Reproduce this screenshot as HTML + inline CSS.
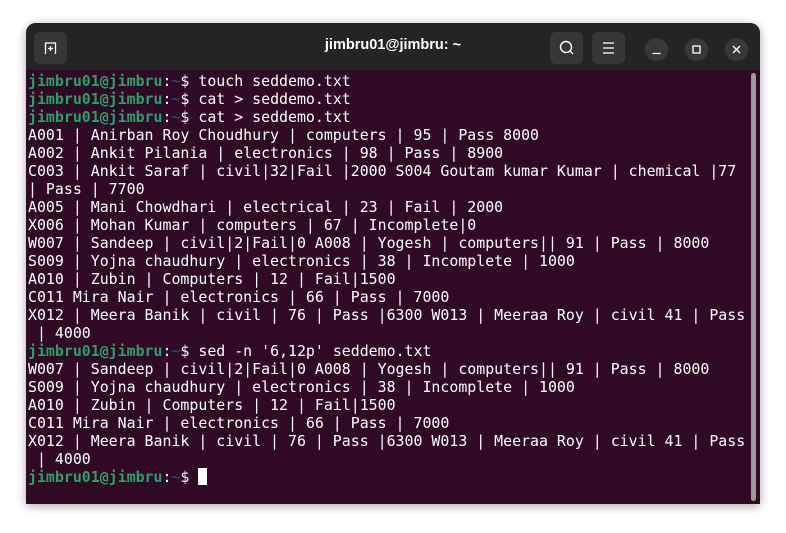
<!DOCTYPE html><html><head><style>
body{margin:0;width:786px;height:533px;background:#fff;position:relative;overflow:hidden;font-family:"Liberation Sans",sans-serif}
.win{position:absolute;left:26px;top:23px;width:734px;height:481px;border-radius:10px 10px 0 0;overflow:hidden;box-shadow:0 2px 10px rgba(0,0,0,.35);background:#300a24}
.tb{position:absolute;left:0;top:0;width:100%;height:47px;background:#242424}
.title{position:absolute;left:0;width:100%;top:14px;text-align:center;color:#fff;font-weight:bold;font-size:14.5px}
.btn{position:absolute;top:9px;width:33px;height:32px;background:#363636;border-radius:6px}
.cir{position:absolute;top:15px;width:23px;height:23px;border-radius:50%;background:#383838}
pre{position:absolute;left:2px;top:49px;margin:0;font-family:"DejaVu Sans Mono",monospace;font-size:14.9px;line-height:18px;color:#fff;letter-spacing:0}
.g{color:#26a269;font-weight:bold}.b{color:#12488b;font-weight:bold}
.sb{position:absolute;left:725px;top:50px;width:5px;height:428px;background:#9a9a9a;border-radius:3px}
.cur{display:inline-block;width:9px;height:17px;background:#fff;vertical-align:-3px}
</style></head><body><div class="win">
<div class="tb">
<div class="btn" style="left:8px"><svg width="33" height="32"><path d="M11.5 22V11h10v11M14 16.5h5M16.5 14v5" stroke="#fff" stroke-width="1.3" fill="none"/></svg></div>
<div class="title">jimbru01@jimbru: ~</div>
<div class="btn" style="left:524px"><svg width="33" height="32"><circle cx="16" cy="15" r="5.5" stroke="#fff" stroke-width="1.4" fill="none"/><path d="M20 19l3 3" stroke="#fff" stroke-width="1.4"/></svg></div>
<div class="btn" style="left:566px"><svg width="33" height="32"><path d="M11 11h11M11 16h11M11 21h11" stroke="#fff" stroke-width="1.3"/></svg></div>
<div class="cir" style="left:619px"><svg width="23" height="23"><path d="M7.5 15.5h8" stroke="#fff" stroke-width="1.3"/></svg></div>
<div class="cir" style="left:659px"><svg width="23" height="23"><rect x="8" y="8" width="7" height="7" stroke="#fff" stroke-width="1.3" fill="none"/></svg></div>
<div class="cir" style="left:699px"><svg width="23" height="23"><path d="M8 8l7 7M15 8l-7 7" stroke="#fff" stroke-width="1.3"/></svg></div>
</div>
<pre><span class="g">jimbru01@jimbru</span>:<span class="b">~</span>$ touch seddemo.txt
<span class="g">jimbru01@jimbru</span>:<span class="b">~</span>$ cat &gt; seddemo.txt
<span class="g">jimbru01@jimbru</span>:<span class="b">~</span>$ cat &gt; seddemo.txt
A001 | Anirban Roy Choudhury | computers | 95 | Pass 8000
A002 | Ankit Pilania | electronics | 98 | Pass | 8900
C003 | Ankit Saraf | civil|32|Fail |2000 S004 Goutam kumar Kumar | chemical |77
| Pass | 7700
A005 | Mani Chowdhari | electrical | 23 | Fail | 2000
X006 | Mohan Kumar | computers | 67 | Incomplete|0
W007 | Sandeep | civil|2|Fail|0 A008 | Yogesh | computers|| 91 | Pass | 8000
S009 | Yojna chaudhury | electronics | 38 | Incomplete | 1000
A010 | Zubin | Computers | 12 | Fail|1500
C011 Mira Nair | electronics | 66 | Pass | 7000
X012 | Meera Banik | civil | 76 | Pass |6300 W013 | Meeraa Roy | civil 41 | Pass
 | 4000
<span class="g">jimbru01@jimbru</span>:<span class="b">~</span>$ sed -n '6,12p' seddemo.txt
W007 | Sandeep | civil|2|Fail|0 A008 | Yogesh | computers|| 91 | Pass | 8000
S009 | Yojna chaudhury | electronics | 38 | Incomplete | 1000
A010 | Zubin | Computers | 12 | Fail|1500
C011 Mira Nair | electronics | 66 | Pass | 7000
X012 | Meera Banik | civil | 76 | Pass |6300 W013 | Meeraa Roy | civil 41 | Pass
 | 4000
<span class="g">jimbru01@jimbru</span>:<span class="b">~</span>$ <span class="cur"></span></pre>
<div class="sb"></div>
</div></body></html>
